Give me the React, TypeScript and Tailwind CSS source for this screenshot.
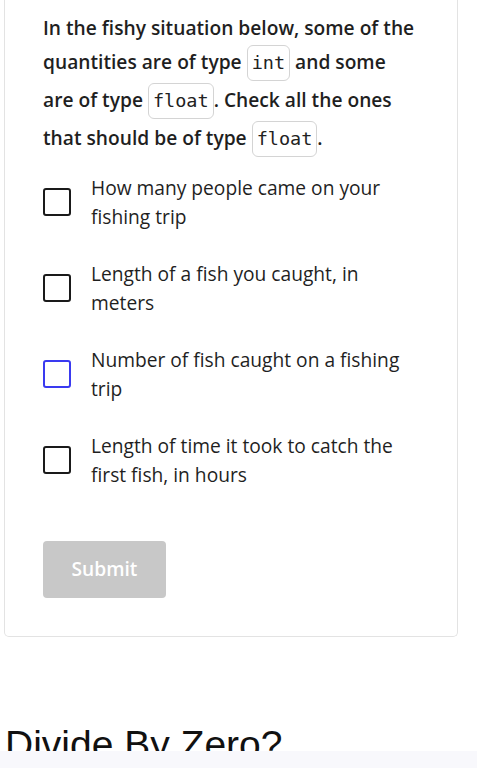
import React from 'react';

const Code: React.FC<{ children: React.ReactNode }> = ({ children }) => (
  <code className="inline-block my-px px-[4px] border border-[#d4d4d4] rounded-[6px] font-['DejaVu_Sans_Mono',monospace] text-[18.5px] leading-[34px] text-[#222] font-normal">
    {children}
  </code>
);

const options = [
  { label: 'How many people came on your fishing trip', focused: false },
  { label: 'Length of a fish you caught, in meters', focused: false },
  { label: 'Number of fish caught on a fishing trip', focused: true },
  { label: 'Length of time it took to catch the first fish, in hours', focused: false },
];

export default function App() {
  return (
    <div className="min-h-[768px] bg-white font-['Open_Sans',sans-serif] text-[#1f1f1f]">
      <div className="ml-[4px] w-[454px] border-x border-b border-[#e3e3e3] rounded-b-[5px] pl-[38px] pr-[38px] pt-[11px] pb-[38px]">
        <p className="text-[19.2px] leading-[33px] font-semibold">
          In the fishy situation below, some of the quantities are of type <Code>int</Code> and some are of type{' '}
          <Code>float</Code>. Check all the ones that should be of type <Code>float</Code>.
        </p>

        <div className="mt-[15px] flex flex-col gap-[28px]">
          {options.map((o) => (
            <label key={o.label} className="flex items-center gap-[20px]">
              <span
                className={
                  'w-[28px] h-[28px] shrink-0 rounded-[3px] border-2 ' +
                  (o.focused ? 'border-[#3a3af0]' : 'border-[#1a1a1a]')
                }
              />
              <span className="w-[328px] text-[19.2px] leading-[29px]">{o.label}</span>
            </label>
          ))}
        </div>

        <button className="mt-[52px] w-[123px] h-[57px] rounded-[4px] bg-[#c8c8c8] text-white text-[19.2px] font-semibold">
          Submit
        </button>
      </div>

      <h2 className="mt-[85px] ml-[5px] font-['Liberation_Sans',Arial,sans-serif] text-[39px] leading-[46px] text-[#111]">
        Divide By Zero?
      </h2>

      <div className="fixed bottom-0 left-0 right-0 h-[17px] bg-[#f8f8fc]" />
    </div>
  );
}
